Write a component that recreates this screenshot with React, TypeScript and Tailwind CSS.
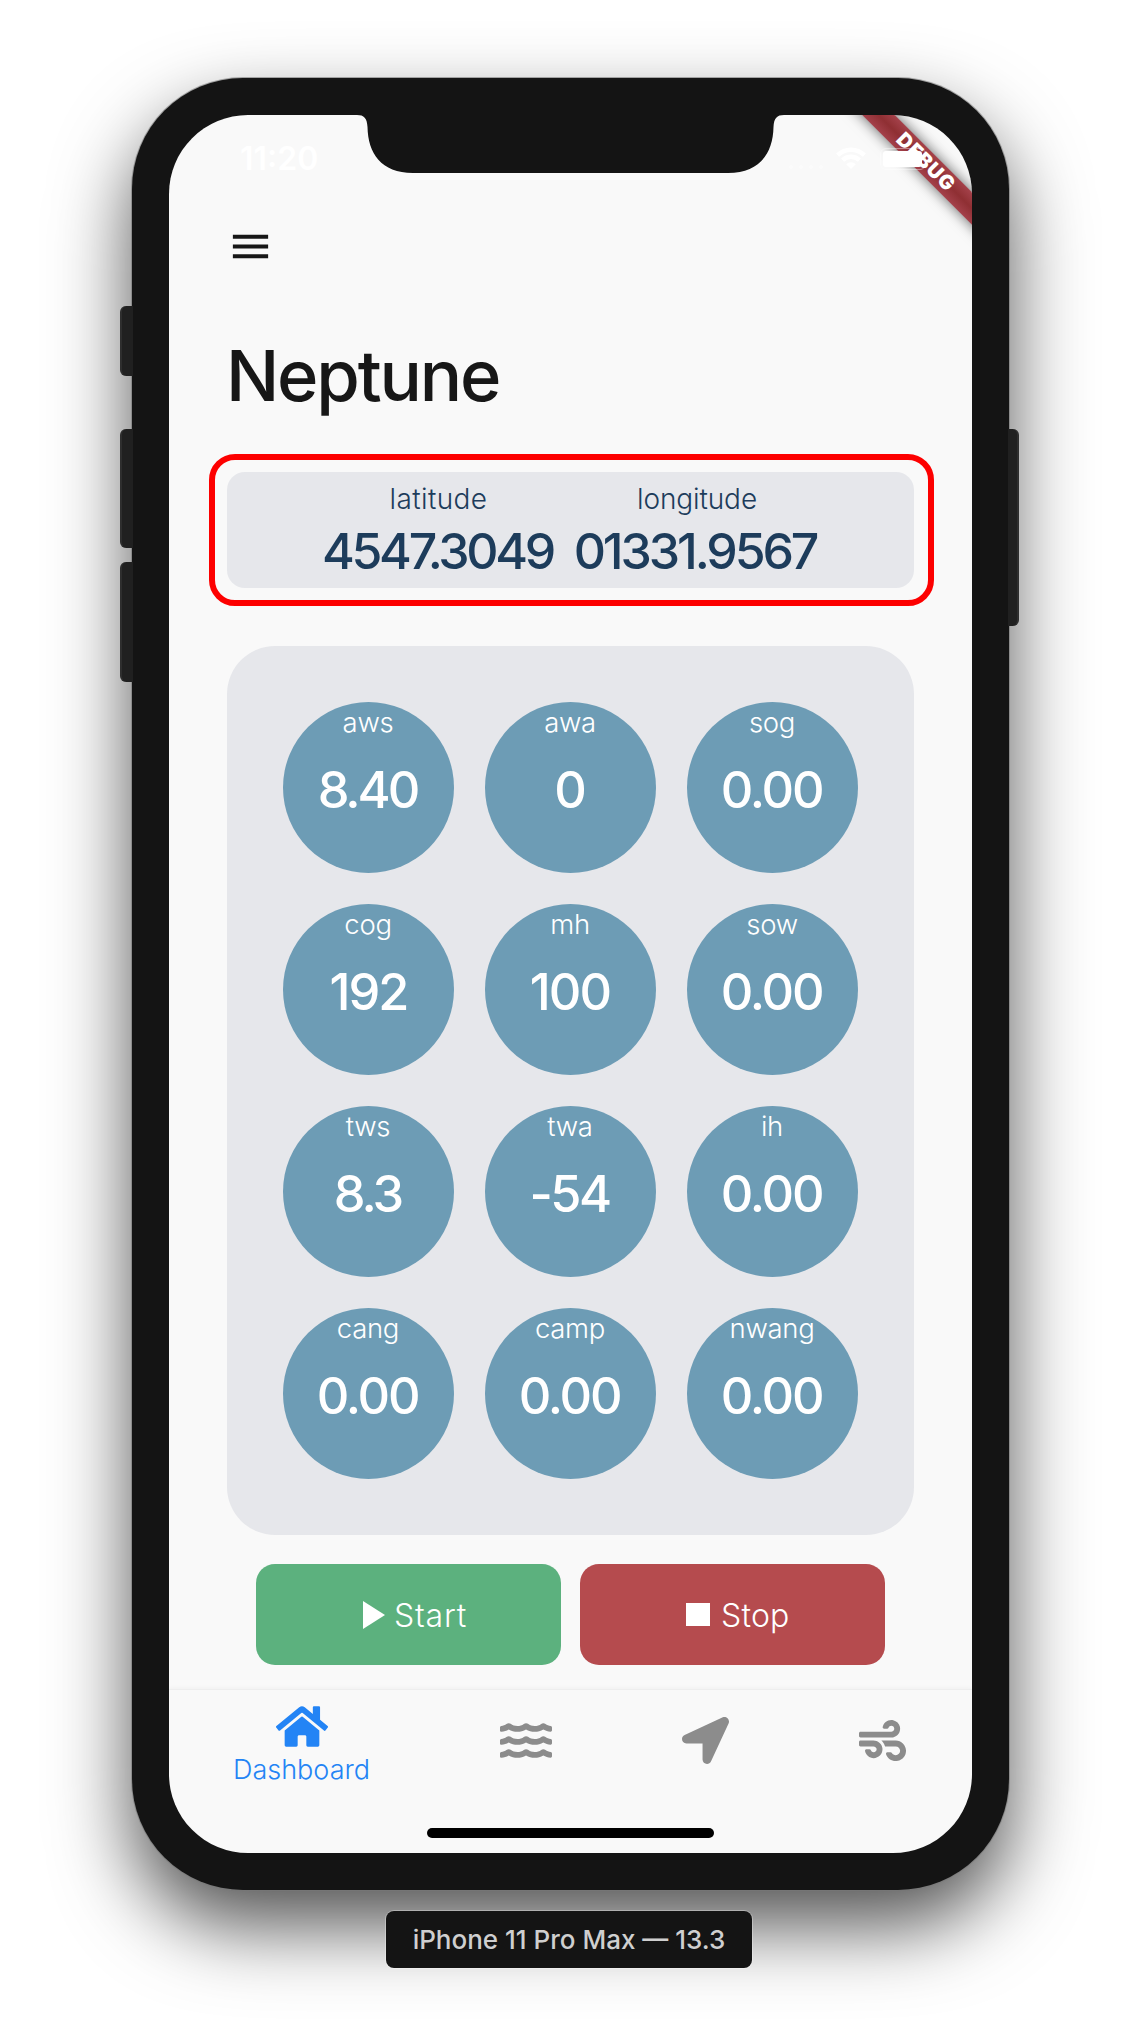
import React from 'react';
import { FaHome, FaWater, FaLocationArrow, FaWind } from 'react-icons/fa';

type Reading = { name: string; value: string; valueClass: string };

const DIGITS = 'mr-[2px] tracking-[-2.2px]';

const readings: Reading[] = [
  { name: 'aws', value: '8.40', valueClass: 'mr-[2px] tracking-[-3px]' },
  { name: 'awa', value: '0', valueClass: '' },
  { name: 'sog', value: '0.00', valueClass: DIGITS },
  { name: 'cog', value: '192', valueClass: 'tracking-[-1.9px]' },
  { name: 'mh', value: '100', valueClass: 'mr-[1px] tracking-[-1.9px]' },
  { name: 'sow', value: '0.00', valueClass: DIGITS },
  { name: 'tws', value: '8.3', valueClass: 'mr-[2px] tracking-[-3px]' },
  { name: 'twa', value: '-54', valueClass: 'mr-[2px] tracking-[-2.5px]' },
  { name: 'ih', value: '0.00', valueClass: DIGITS },
  { name: 'cang', value: '0.00', valueClass: DIGITS },
  { name: 'camp', value: '0.00', valueClass: DIGITS },
  { name: 'nwang', value: '0.00', valueClass: DIGITS },
];

function Gauge({ name, value, valueClass }: Reading) {
  return (
    <div className="flex h-[171px] w-[171px] flex-col items-center rounded-full bg-[#6d9cb5] text-white">
      <span className="mr-[1px] mt-[4px] text-[27.5px] font-light leading-[32px] tracking-[-0.3px]">{name}</span>
      <span className={`mt-[22px] text-[50.5px] font-[550] leading-[60px] ${valueClass}`}>{value}</span>
    </div>
  );
}

function StatusBar() {
  return (
    <div className="relative h-[108px] w-full shrink-0">
      {/* Notch */}
      <svg className="absolute left-[188px] top-0" width="427" height="58" viewBox="0 0 427 58" fill="#141414">
        <path d="M0 0C7 0 10 3 10.500 12C11 38 24 58 56 58H371C403 58 416 38 416.500 12C417 3 420 0 427 0Z" />
      </svg>
      <span className="absolute left-[71px] top-[26px] text-[32px] font-semibold leading-[36px] text-white">
        11:20
      </span>
      {/* Debug ribbon */}
      <div className="absolute left-[656px] top-[35px] flex h-[23px] w-[200px] rotate-45 items-center justify-center bg-linear-to-b from-[#a4414a] via-[#8f2f33] to-[#a4404a] pl-[2px] text-[20px] font-black leading-[23px] tracking-[0.8px] text-white shadow-[0_0_14px_rgba(0,0,0,0.6)]">
        DEBUG
      </div>
      <svg className="absolute left-[620px] top-[50px]" width="36" height="4" fill="white" fillOpacity="0.35">
        <circle cx="2" cy="2" r="2" /><circle cx="12" cy="2" r="2" /><circle cx="22" cy="2" r="2" /><circle cx="32" cy="2" r="2" />
      </svg>
      <svg className="absolute left-[667px] top-[32px]" width="30" height="22" viewBox="0 0 30 22" fill="none" stroke="white" strokeWidth="4.500">
        <path d="M1.600 8.200A19 19 0 0 1 28.400 8.200" />
        <path d="M6.600 13.200A12 12 0 0 1 23.400 13.200" />
        <path d="M15 22L10.200 17.200A7 7 0 0 1 19.800 17.200Z" fill="white" stroke="none" />
      </svg>
      <div className="absolute left-[711px] top-[33px] h-[22px] w-[46px] rounded-[6px] border border-white/40 p-[2px]">
        <div className="h-[16px] w-[39px] rounded-[3px] bg-white" />
      </div>
    </div>
  );
}

function Coordinates() {
  return (
    <div className="-ml-[18px] mt-[38px] h-[152px] w-[725px] rounded-[26px] border-6 border-[#fd0000] py-[12px] pl-[12px] pr-[14px]">
      <div className="flex h-[116px] justify-center rounded-[18px] bg-[#e6e7eb] text-[#1d3c5b]">
        <div className="mr-[20px] flex w-[233px] flex-col items-center">
          <span className="mt-[11px] text-[28px] font-light leading-[32px] tracking-[0.4px]">latitude</span>
          <span className="mr-[2px] mt-[6px] text-[50px] font-[550] leading-[60px] tracking-[-3.3px]">4547.3049</span>
        </div>
        <div className="flex w-[244px] flex-col items-center">
          <span className="mt-[11px] text-[28px] font-light leading-[32px] tracking-[-0.1px]">longitude</span>
          <span className="mr-[4px] mt-[6px] text-[50px] font-[550] leading-[60px] tracking-[-3.1px]">01331.9567</span>
        </div>
      </div>
    </div>
  );
}

function Phone() {
  return (
    <div className="relative ml-[1px] mt-[78px] h-[1812px] w-[877px] rounded-[111px] bg-[#141414] p-[37px] shadow-[0_0_0_1px_rgba(120,120,120,0.6),0_36px_78px_rgba(0,0,0,0.68)]">
      <i className="absolute -left-[12px] top-[228px] h-[70px] w-[13px] rounded-l-[6px] border-l-2 border-[#2e2e2e] bg-[#202020]" />
      <i className="absolute -left-[12px] top-[351px] h-[119px] w-[13px] rounded-l-[6px] border-l-2 border-[#2e2e2e] bg-[#202020]" />
      <i className="absolute -left-[12px] top-[484px] h-[120px] w-[13px] rounded-l-[6px] border-l-2 border-[#2e2e2e] bg-[#202020]" />
      <i className="absolute -right-[10px] top-[351px] h-[197px] w-[11px] rounded-r-[6px] border-r-2 border-[#2e2e2e] bg-[#202020]" />

      <div className="relative flex h-[1738px] w-[803px] flex-col overflow-hidden rounded-[79px] bg-[#f9f9f9]">
        <StatusBar />
        <div className="flex flex-col px-[58px]">
          <svg className="h-[47px] w-[47px]" viewBox="0 0 24 24" fill="#171717">
            <path d="M3 18h18v-2H3v2zm0-5h18v-2H3v2zm0-7v2h18V6H3z" />
          </svg>
          <h1 className="-ml-[1px] mt-[66px] text-[70.5px] font-[450] leading-[80px] tracking-[-2.2px] text-[#171717]">Neptune</h1>
          <Coordinates />
          <div className="mt-[40px] grid h-[889px] w-[687px] grid-cols-[repeat(3,171px)] content-start gap-x-[31px] gap-y-[31px] rounded-[48px] bg-[#e6e7eb] pl-[56px] pt-[56px]">
            {readings.map((r) => (
              <Gauge key={r.name} {...r} />
            ))}
          </div>
          <div className="ml-[29px] mt-[29px] flex gap-[19px] text-[32px] font-light text-white">
            <button className="flex h-[101px] w-[305px] items-center rounded-[19px] bg-[#5cb17e] pl-[107px]">
              <svg width="22" height="28" viewBox="0 0 22 28" fill="white"><path d="M0 0L22 14L0 28Z" /></svg>
              <span className="ml-[9px] mt-[2px] tracking-[0.8px]">Start</span>
            </button>
            <button className="flex h-[101px] w-[305px] items-center rounded-[19px] bg-[#b54b4e] pl-[106px]">
              <i className="h-[23px] w-[24px] bg-white" />
              <span className="ml-[11px] mt-[2px] tracking-[0.2px]">Stop</span>
            </button>
          </div>
        </div>
        <nav className="mt-[24px] flex h-[165px] shrink-0 justify-between border-t border-[#eeeeee] pl-[64px] pr-[66px] text-[#8c8c8c] shadow-[0_-1px_4px_rgba(0,0,0,0.04)]">
          <div className="flex w-[137px] flex-col items-center text-[#2384f5]">
            <FaHome className="mt-[13px] h-[47px] w-[52px]" />
            <span className="mt-[4px] text-[27px] font-light leading-[32px]">Dashboard</span>
          </div>
          <FaWater className="mt-[27px] h-[47px] w-[52px]" />
          <FaLocationArrow className="mt-[27px] h-[47px] w-[47px]" />
          <FaWind className="mt-[27px] h-[47px] w-[47px]" />
        </nav>
        <div className="absolute bottom-[15px] left-[258px] h-[10px] w-[287px] rounded-full bg-black" />
      </div>
    </div>
  );
}

export default function App() {
  return (
    <main className="flex h-[2040px] w-[1140px] flex-col items-center overflow-hidden bg-white font-['Inter',sans-serif]">
      <Phone />
      <div className="relative z-10 mr-[2px] mt-[21px] flex h-[57px] w-[366px] items-center justify-center rounded-[8px] bg-[#141414] text-[26px] font-medium text-[#cfcfcf] shadow-[0_0_0_1px_rgba(255,255,255,0.3)]">
        iPhone 11 Pro Max — 13.3
      </div>
    </main>
  );
}
